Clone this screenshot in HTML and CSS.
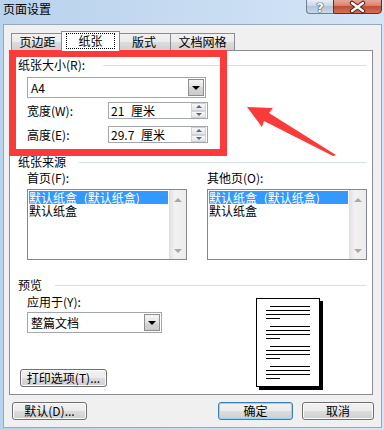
FILE: index.html
```html
<!DOCTYPE html>
<html lang="zh-CN">
<head>
  <meta charset="UTF-8" />
  <title>页面设置</title>
  <link rel="stylesheet" href="styles.css">
</head>
<body>
  <div class="window">
    <div class="titlebar">
      <span class="title">页面设置</span>
      <div class="caption">
        <div class="cap-help">?</div>
        <div class="cap-close">
          <svg width="47" height="14" viewBox="0 0 47 14">
            <path d="M18 3 L29 11 M29 3 L18 11" stroke="#5a2216" stroke-width="4.5" stroke-linecap="round" fill="none"/>
            <path d="M18 3 L29 11 M29 3 L18 11" stroke="#fff" stroke-width="2.4" stroke-linecap="round" fill="none"/>
          </svg>
        </div>
      </div>
    </div>

    <div class="client">
      <div class="tabs">
        <div class="tab t1">页边距</div>
        <div class="tab t2 active"><span class="focus">纸张</span></div>
        <div class="tab t3">版式</div>
        <div class="tab t4">文档网格</div>
      </div>

      <div class="panel">
        <!-- 纸张大小 -->
        <div class="group-head first"><span>纸张大小(R):</span><i class="rule"></i></div>
        <div class="combo size-combo indent">
          <span>A4</span>
          <b class="drop"></b>
        </div>
        <div class="field-row indent row-w">
          <label>宽度(W):</label>
          <div class="spin">
            <span>21 厘米</span>
            <div class="spin-btns"><b class="up"></b><b class="down"></b></div>
          </div>
        </div>
        <div class="field-row indent row-h">
          <label>高度(E):</label>
          <div class="spin">
            <span>29.7 厘米</span>
            <div class="spin-btns"><b class="up"></b><b class="down"></b></div>
          </div>
        </div>

        <!-- 纸张来源 -->
        <div class="group-head source-head"><span>纸张来源</span><i class="rule"></i></div>
        <div class="sources indent">
          <div class="src-label">首页(F):</div>
          <div class="src-label">其他页(O):</div>
          <div class="listbox">
            <div class="items">
              <div class="item sel">默认纸盒 (默认纸盒)</div>
              <div class="item">默认纸盒</div>
            </div>
            <div class="vscroll"><b class="s-up"></b><b class="s-down"></b></div>
          </div>
          <div class="listbox">
            <div class="items">
              <div class="item sel">默认纸盒 (默认纸盒)</div>
              <div class="item">默认纸盒</div>
            </div>
            <div class="vscroll"><b class="s-up"></b><b class="s-down"></b></div>
          </div>
        </div>

        <!-- 预览 -->
        <div class="group-head preview-head"><span>预览</span><i class="rule"></i></div>
        <div class="preview">
          <div class="preview-left">
            <div class="apply-label">应用于(Y):</div>
            <div class="combo apply-combo">
              <span>整篇文档</span>
              <b class="drop"></b>
            </div>
            <div class="btn print-btn">打印选项(T)...</div>
          </div>
          <div class="page">
            <div class="para"><i class="ln first-ln"></i><i class="ln"></i><i class="ln"></i><i class="ln short"></i></div>
            <div class="para"><i class="ln first-ln"></i><i class="ln"></i><i class="ln"></i><i class="ln short"></i></div>
            <div class="para"><i class="ln first-ln"></i><i class="ln"></i><i class="ln"></i><i class="ln short"></i></div>
            <div class="para"><i class="ln first-ln"></i><i class="ln"></i><i class="ln"></i><i class="ln short"></i></div>
          </div>
        </div>
      </div>

      <div class="buttons">
        <div class="btn">默认(D)...</div>
        <div class="btn ok">确定</div>
        <div class="btn cancel">取消</div>
      </div>
    </div>

    <!-- annotation -->
    <div class="red-box"></div>
    <svg class="arrow" width="384" height="430" viewBox="0 0 384 430">
      <polygon points="247,107 273,108 269,113 336,155 333,156 264,121 262,127" fill="#fb3a3a"/>
    </svg>
  </div>
</body>
</html>
```

FILE: styles.css
```css
* {
  box-sizing: border-box;
}

body {
  margin: 0;
  width: 384px;
  height: 430px;
  overflow: hidden;
  font-family: "Noto Sans CJK SC", "Noto Sans", sans-serif;
  font-size: 12px;
  line-height: 14px;
  color: #000;
}

.window {
  position: relative;
  width: 384px;
  height: 430px;
  background: linear-gradient(to right, #b9d2ed, #c8dcf2 55%, #d5e5f7);
}

/* title bar */
.titlebar {
  height: 24px;
  display: flex;
  align-items: flex-start;
}

.title {
  margin: 2px 0 0 3px;
}

.caption {
  margin-left: auto;
  margin-right: 2px;
  display: flex;
}

.cap-help {
  width: 27px;
  height: 15px;
  margin-top: -1px;
  border: 1px solid #6f8095;
  border-right: none;
  border-radius: 0 0 0 4px;
  background: linear-gradient(#e6eef7, #cad7e6 45%, #b4c5d9 50%, #c9d8ea);
  color: #fff;
  font-family: "DejaVu Sans", sans-serif;
  font-weight: bold;
  font-size: 13px;
  line-height: 15px;
  text-align: center;
  text-shadow: 0 0 1px #2c3c50, 0 0 1px #2c3c50, 0 0 1px #2c3c50;
}

.cap-close {
  width: 49px;
  height: 15px;
  margin-top: -1px;
  border: 1px solid #6a2a1e;
  border-radius: 0 0 4px 0;
  background: linear-gradient(#e9a796, #d5806a 45%, #c24e35 50%, #d3705a);
}

.cap-close svg {
  display: block;
}

/* client area */
.client {
  width: 379px;
  height: 404px;
  margin-left: 3px;
  border: 1px solid #98a8ba;
  background: #f0f0f0;
}

.tabs {
  display: flex;
  align-items: flex-end;
  height: 19px;
  margin: 6px 0 0 7px;
  position: relative;
  z-index: 1;
}

.tab {
  height: 17px;
  margin-right: -1px;
  border: 1px solid #898c95;
  border-bottom: none;
  background: linear-gradient(#f2f2f2, #ebebeb 50%, #dddddd 50%, #cfcfcf);
  display: flex;
  align-items: center;
  justify-content: center;
}

.t1 { width: 53px; }
.t3 { width: 54px; }
.t4 { width: 65px; }

.tab.active {
  position: relative;
  z-index: 2;
  width: 59px;
  height: 20px;
  margin: 0 -3px -1px -2px;
  background: #fff;
  padding-bottom: 1px;
}

.focus {
  padding: 0 11px;
  outline: 1px dotted #000;
  line-height: 14px;
}

.panel {
  width: 364px;
  height: 345px;
  margin-left: 5px;
  padding: 7px 6px 0 8px;
  border: 1px solid #898c95;
  background: #fff;
}

.group-head {
  display: flex;
  align-items: center;
  height: 14px;
}

.rule {
  flex: 1;
  height: 1px;
  margin-left: 13px;
  background: #d5dfe9;
}

.group-head.first .rule {
  margin-left: 18px;
}

.indent {
  margin-left: 9px;
}

/* combo boxes */
.combo {
  display: flex;
  align-items: center;
  border: 1px solid #a3a6ad;
  background: #fff;
  padding-left: 3px;
}

.combo span {
  flex: 1;
}

.drop {
  width: 16px;
  height: 17px;
  margin: 1px;
  border: 1px solid #8c8e92;
  background: linear-gradient(#f4f4f4, #e4e4e4 50%, #d6d6d6 50%, #cbcbcb);
  display: flex;
  align-items: center;
  justify-content: center;
}

.drop::after {
  content: "";
  border-left: 4px solid transparent;
  border-right: 4px solid transparent;
  border-top: 4px solid #000;
}

.size-combo {
  width: 179px;
  height: 21px;
  margin-top: 5px;
}

.field-row {
  display: flex;
  align-items: center;
}

.field-row label {
  width: 81px;
}

.row-w { margin-top: 4px; }
.row-h { margin-top: 7px; }

.spin {
  display: flex;
  align-items: center;
  width: 100px;
  height: 17px;
  border: 1px solid #a3a6ad;
  padding-left: 2px;
}

.spin span {
  flex: 1;
  word-spacing: 4px;
}

.spin-btns {
  width: 15px;
  height: 15px;
  margin-right: 1px;
  display: flex;
  flex-direction: column;
}

.spin-btns b {
  flex: 1;
  border: 1px solid #cfd3d9;
  background: linear-gradient(#f8f8f8, #e5e5e5);
  display: flex;
  align-items: center;
  justify-content: center;
}

.spin-btns .up::after {
  content: "";
  border-left: 3px solid transparent;
  border-right: 3px solid transparent;
  border-bottom: 3px solid #56698c;
}

.spin-btns .down::after {
  content: "";
  border-left: 3px solid transparent;
  border-right: 3px solid transparent;
  border-top: 3px solid #56698c;
}

/* paper source */
.source-head {
  margin-top: 12px;
}

.sources {
  display: grid;
  grid-template-columns: 160px 160px;
  column-gap: 20px;
  margin-top: 2px;
}

.listbox {
  display: flex;
  height: 71px;
  margin-top: 4px;
  border: 1px solid #828790;
  background: #fff;
}

.items {
  flex: 1;
  padding: 1px;
}

.item {
  height: 13px;
  line-height: 13px;
  white-space: nowrap;
  word-spacing: 4px;
}

.item.sel {
  background: #3399ff;
  color: #fff;
}

.vscroll {
  width: 17px;
  background: linear-gradient(to right, #e3e3e3, #f2f2f2 30%, #ececec);
  border-left: 1px solid #e0e0e0;
  display: flex;
  flex-direction: column;
  justify-content: space-between;
  align-items: center;
  padding: 8px 0 6px;
}

.s-up {
  border-left: 4px solid transparent;
  border-right: 4px solid transparent;
  border-bottom: 4px solid #a8a8a8;
}

.s-down {
  border-left: 4px solid transparent;
  border-right: 4px solid transparent;
  border-top: 4px solid #a8a8a8;
}

/* preview */
.preview-head {
  margin-top: 18px;
}

.preview {
  display: flex;
}

.preview-left {
  width: 143px;
}

.apply-label {
  margin: 3px 0 0 9px;
}

.apply-combo {
  width: 135px;
  height: 21px;
  margin: 3px 0 0 9px;
}

.btn {
  height: 18px;
  border: 1px solid #707070;
  border-radius: 3px;
  background: linear-gradient(#f2f2f2, #ebebeb 50%, #dddddd 50%, #cfcfcf);
  box-shadow: inset 0 0 0 1px #fbfbfb;
  display: flex;
  align-items: center;
  justify-content: center;
  white-space: nowrap;
}

.print-btn {
  width: 87px;
  margin: 36px 0 0 2px;
}

.page {
  width: 64px;
  height: 89px;
  margin: 6px 0 0 95px;
  border: 1px solid #000;
  box-shadow: 3px 3px 0 #000;
  padding: 7px 0 0 9px;
  background: #fff;
}

.para {
  margin-bottom: 7px;
}

.ln {
  display: block;
  width: 44px;
  height: 1px;
  margin-bottom: 3px;
  background: #000;
}

.ln.first-ln {
  width: 40px;
  margin-left: 4px;
}

.ln.short {
  width: 14px;
  margin-bottom: 0;
}

/* bottom buttons */
.buttons {
  display: flex;
  margin-top: 7px;
  padding: 0 7px 0 8px;
}

.buttons .btn {
  width: 75px;
}

.buttons .ok {
  margin-left: auto;
  border-color: #3c7fb1;
  box-shadow: inset 0 0 0 1px #8fd6f9;
}

.buttons .cancel {
  width: 72px;
  margin-left: 9px;
}

/* annotation overlay */
.red-box {
  position: absolute;
  left: 9px;
  top: 50px;
  width: 218px;
  height: 106px;
  border: 7px solid #fb3a3a;
}

.arrow {
  position: absolute;
  left: 0;
  top: 0;
  pointer-events: none;
}
```
